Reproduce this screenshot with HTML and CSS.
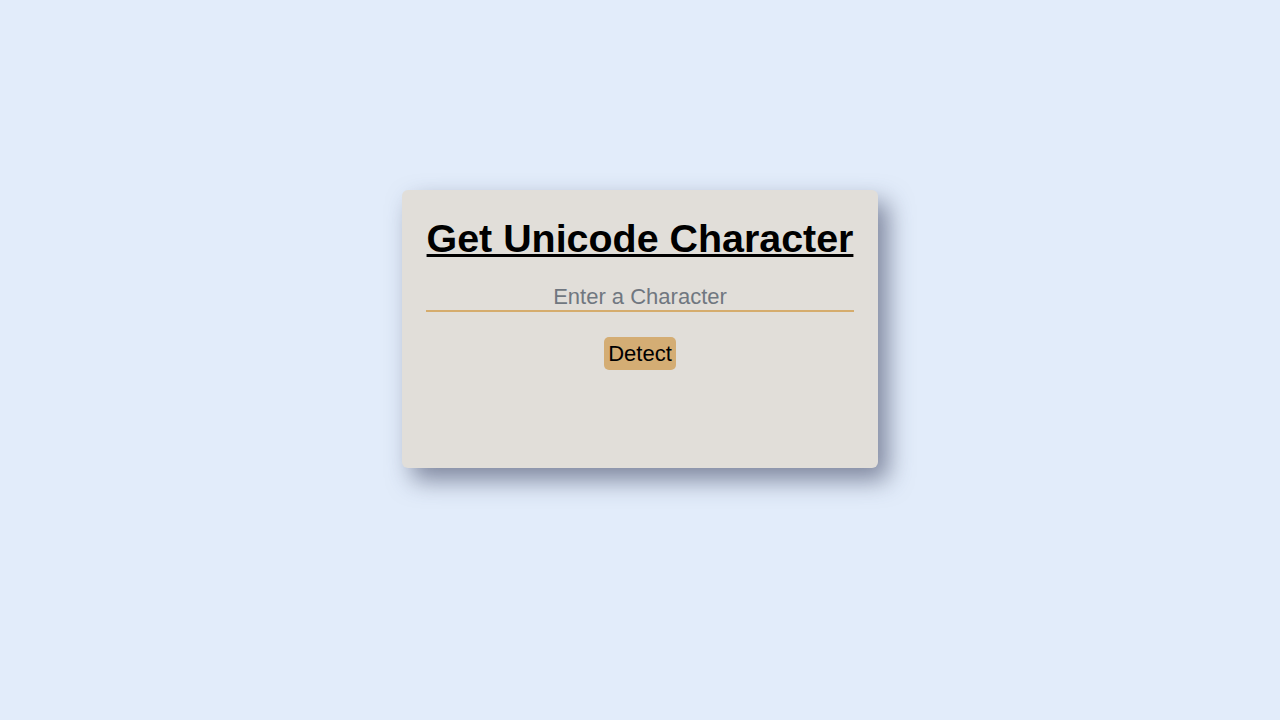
FILE: index.html
```html
<!DOCTYPE html>
<html lang="en">
<head>
<meta charset="utf-8">
<title>Get Unicode Character</title>
<link rel="stylesheet" href="styles.css">
</head>
<body>
  <main class="card">
    <h1 class="title">Get Unicode Character</h1>
    <input class="char-input" type="text" placeholder="Enter a Character">
    <button class="detect-btn" type="button">Detect</button>
    <div class="result"></div>
  </main>
</body>
</html>
```
FILE: styles.css
```css
html, body {
  margin: 0;
  padding: 0;
}
body {
  min-height: 100vh;
  background: #e2ecfa;
  font-family: "Liberation Sans", Arial, sans-serif;
  display: flex;
  justify-content: center;
  align-items: flex-start;
  padding-top: 190px;
  box-sizing: border-box;
}
.card {
  width: 476px;
  height: 278px;
  box-sizing: border-box;
  padding: 26px 24px;
  background: #e1ded9;
  border-radius: 6px;
  box-shadow: 10px 12px 24px rgba(60, 66, 96, 0.6);
  display: flex;
  flex-direction: column;
  align-items: center;
}
.title {
  margin: 0;
  font-size: 39.4px;
  font-weight: bold;
  line-height: normal;
  color: #000;
  text-decoration: underline;
  text-decoration-thickness: 3px;
  text-underline-offset: 2px;
  white-space: nowrap;
}
.char-input {
  margin-top: 22px;
  width: 100%;
  box-sizing: border-box;
  border: none;
  border-bottom: 2px solid #d5ac6d;
  background: transparent;
  font-family: "Liberation Sans", Arial, sans-serif;
  font-size: 22px;
  text-align: center;
  padding: 1px 0 0;
  outline: none;
  color: #000;
}
.char-input::placeholder {
  color: #707780;
}
.detect-btn {
  margin-top: 25px;
  border: none;
  border-radius: 5px;
  background: #d4ad74;
  color: #000;
  font-family: "Liberation Sans", Arial, sans-serif;
  font-size: 22px;
  line-height: 25px;
  padding: 4px 4px;
  cursor: pointer;
}
.result {
  flex: 1;
}
```
